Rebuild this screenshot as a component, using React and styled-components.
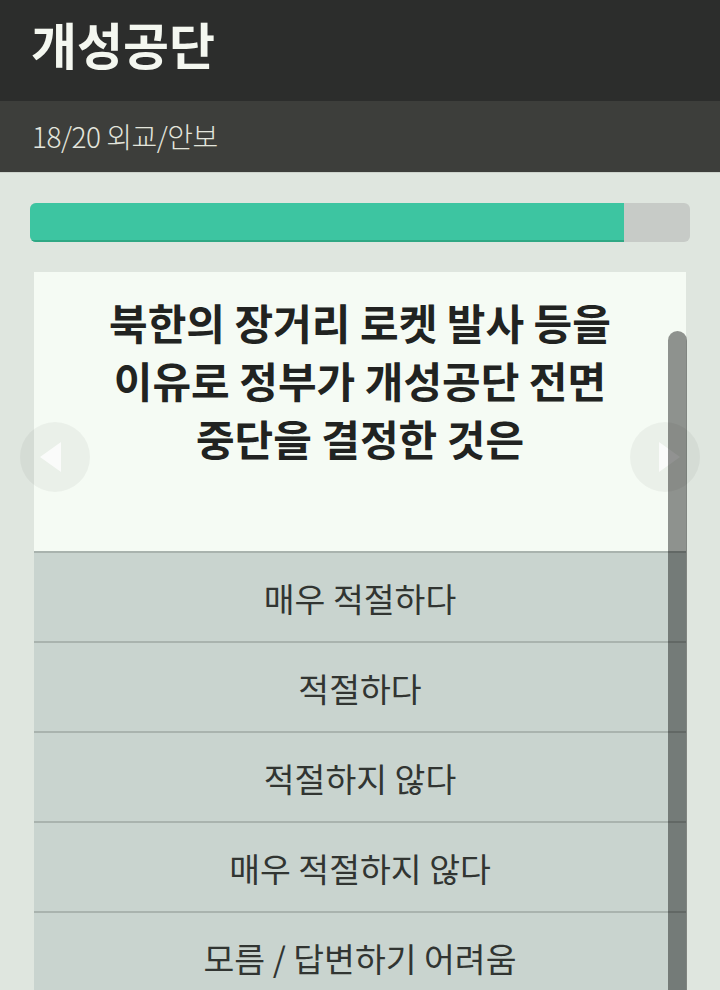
import React from 'react';
import styled, { createGlobalStyle } from 'styled-components';

const GlobalStyle = createGlobalStyle`
  html, body {
    margin: 0;
    padding: 0;
    background: #dfe6df;
    font-family: "Noto Sans CJK KR", "Noto Sans", sans-serif;
  }
`;

const question = {
  title: '개성공단',
  index: 18,
  total: 20,
  category: '외교/안보',
  text: ['북한의 장거리 로켓 발사 등을', '이유로 정부가 개성공단 전면', '중단을 결정한 것은'],
  options: ['매우 적절하다', '적절하다', '적절하지 않다', '매우 적절하지 않다', '모름 / 답변하기 어려움'],
};

const App = () => {
  const percent = (question.index / question.total) * 100;
  return (
    <>
      <GlobalStyle />
      <Page>
        <Header>
          <h1>{question.title}</h1>
        </Header>
        <SubHeader>
          {question.index}/{question.total} {question.category}
        </SubHeader>
        <Main>
          <Progress>
            <ProgressFill style={{ width: `${percent}%` }} />
          </Progress>
          <Card>
            <Question>
              {question.text.map((line) => (
                <span key={line}>{line}</span>
              ))}
            </Question>
            <Options>
              {question.options.map((opt) => (
                <Option key={opt}>{opt}</Option>
              ))}
            </Options>
            <ScrollThumb />
          </Card>
          <NavButton side="left">
            <svg width="22" height="30" viewBox="0 0 22 30">
              <polygon points="0,15 21,0 21,30" fill="rgba(255,255,255,0.75)" />
            </svg>
          </NavButton>
          <NavButton side="right">
            <svg width="22" height="30" viewBox="0 0 22 30">
              <polygon points="22,15 1,0 1,30" fill="rgba(255,255,255,0.75)" />
            </svg>
          </NavButton>
        </Main>
      </Page>
    </>
  );
};

const Page = styled.div`
  width: 720px;
  min-height: 990px;
  overflow: hidden;
`;

const Header = styled.header`
  height: 101px;
  box-sizing: border-box;
  padding: 0 0 16px 31px;
  display: flex;
  align-items: center;
  background: #2c2d2c;

  h1 {
    margin: 0;
    font-size: 50px;
    font-weight: 700;
    line-height: 1;
    color: #f4f7f0;
  }
`;

const SubHeader = styled.div`
  height: 72px;
  box-sizing: border-box;
  padding: 0 0 2px 32px;
  display: flex;
  align-items: center;
  background: #3d3e3b;
  border-bottom: 1px solid #cdd3cc;
  color: #e3e5dd;
  font-size: 28px;
  font-weight: 300;
  letter-spacing: -0.5px;
`;

const Main = styled.main`
  position: relative;
  padding: 30px 30px 0;
`;

const Progress = styled.div`
  height: 39px;
  border-radius: 6px;
  background: #c7cbc7;
  overflow: hidden;
  display: flex;
`;

const ProgressFill = styled.div`
  height: 100%;
  box-sizing: border-box;
  background: #3dc5a1;
  border-bottom: 2px solid #2fa884;
`;

const Card = styled.section`
  position: relative;
  margin: 30px 4px 0;
  background: #f5fbf4;
`;

const Question = styled.div`
  height: 279px;
  box-sizing: border-box;
  padding-top: 21px;
  display: flex;
  flex-direction: column;
  align-items: center;
  color: #212321;
  font-size: 42px;
  font-weight: 700;
  line-height: 58px;
`;

const Options = styled.ul`
  list-style: none;
  margin: 0;
  padding: 0;
  background: #c9d4cf;
`;

const Option = styled.li`
  height: 90px;
  box-sizing: border-box;
  border-top: 2px solid #a9b3ae;
  display: flex;
  align-items: center;
  justify-content: center;
  color: #313532;
  font-size: 33.5px;
  font-weight: 400;
`;

const ScrollThumb = styled.div`
  position: absolute;
  z-index: 2;
  top: 59px;
  right: -1px;
  width: 19px;
  height: 700px;
  border-radius: 10px 10px 0 0;
  background: rgba(0, 0, 0, 0.42);
`;

const NavButton = styled.div`
  position: absolute;
  z-index: 1;
  top: 249px;
  ${(p) => (p.side === 'left' ? 'left: 20px;' : 'right: 20px;')}
  width: 70px;
  height: 70px;
  border-radius: 50%;
  background: rgba(0, 0, 0, 0.045);
  display: flex;
  align-items: center;
  justify-content: center;

  svg {
    margin-${(p) => (p.side === 'left' ? 'right' : 'left')}: 8px;
  }
`;

export default App;
